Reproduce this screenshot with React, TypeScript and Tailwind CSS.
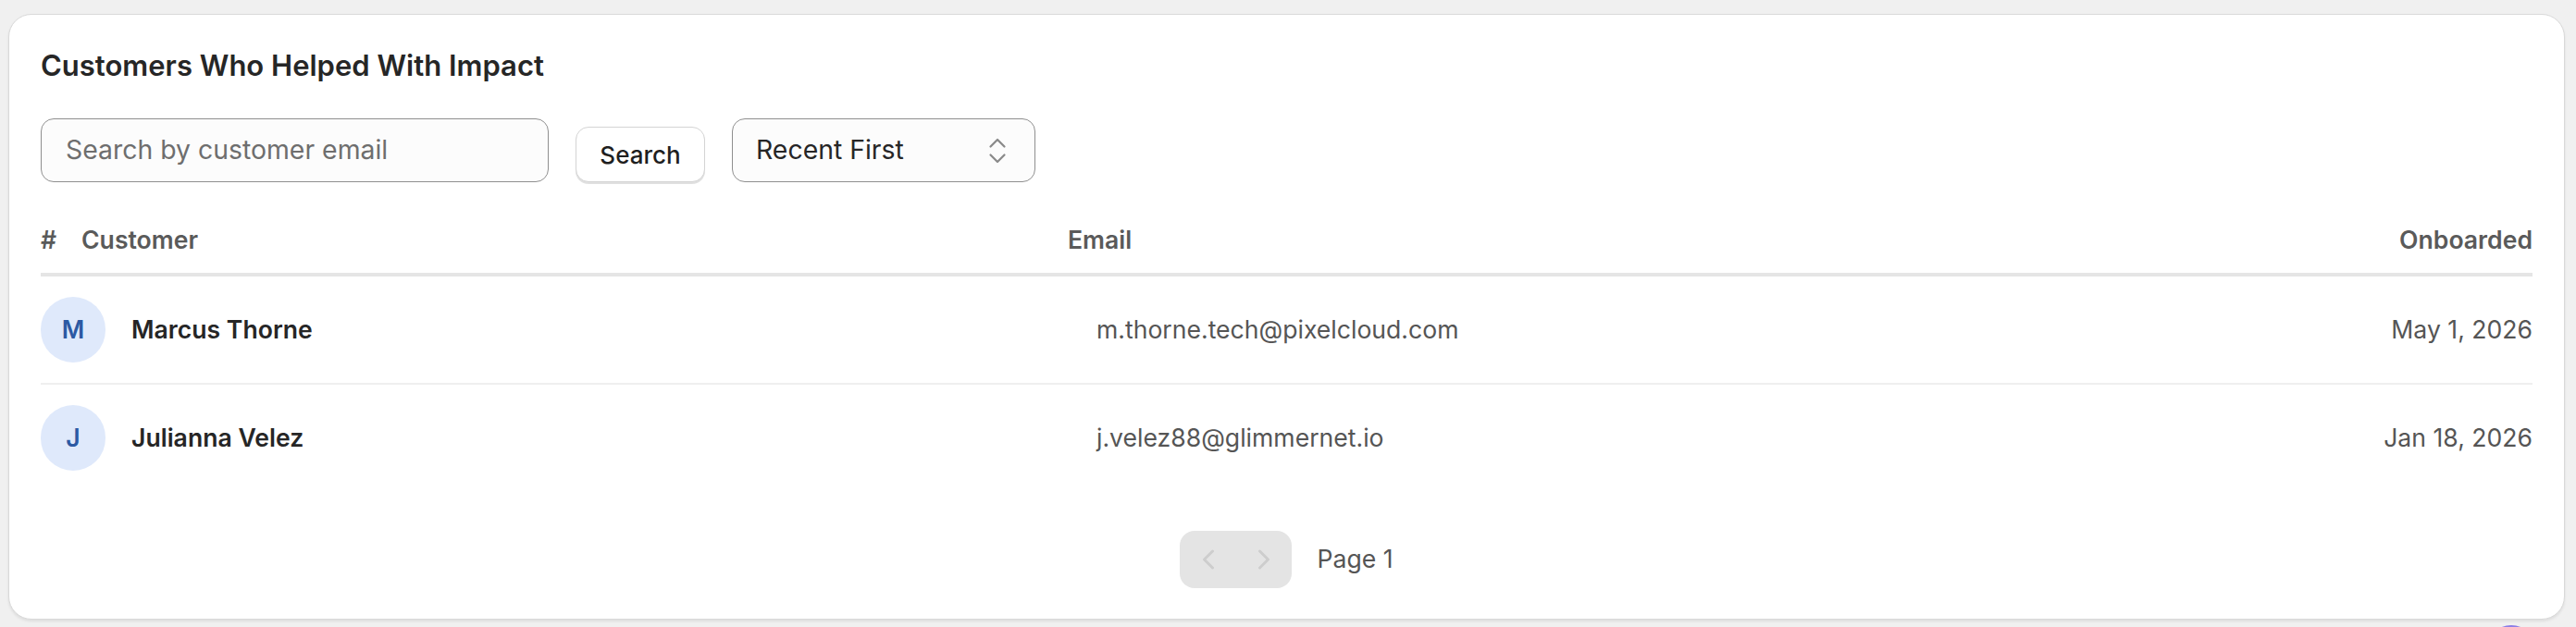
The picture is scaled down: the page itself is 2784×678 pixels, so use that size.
import { ChevronLeft, ChevronRight, ChevronsUpDown } from 'lucide-react';

interface Customer {
  name: string;
  email: string;
  onboarded: string;
}

const customers: Customer[] = [
  { name: 'Marcus Thorne', email: 'm.thorne.tech@pixelcloud.com', onboarded: 'May 1, 2026' },
  { name: 'Julianna Velez', email: 'j.velez88@glimmernet.io', onboarded: 'Jan 18, 2026' },
];

export default function App() {
  return (
    <div className="relative min-h-screen overflow-hidden bg-[#f0f0f0] pt-[15px] pl-[9px] pr-[12px] font-['Inter',sans-serif]">
      <div className="rounded-[25px] border border-[#d9d9d9] bg-white px-[34px] pt-[32px] pb-[33px] shadow-[0_2px_3px_rgba(0,0,0,0.08)]">
        <h2 className="text-[31px] leading-[46px] font-semibold text-[#262626]">
          Customers Who Helped With Impact
        </h2>

        {/* toolbar */}
        <div className="mt-[34px] flex items-end gap-[29px]">
          <div className="flex h-[69px] w-[549px] items-center rounded-[14px] border border-[#8f8f8f] bg-[#fcfcfc] px-[26px] text-[28.4px] text-[#6e6e6e]">
            Search by customer email
          </div>
          <button className="h-[60px] w-[140px] rounded-[14px] border border-[#d4d4d4] bg-white text-[26px] font-medium text-[#1f1f1f] shadow-[0_2px_0_rgba(0,0,0,0.12)]">
            Search
          </button>
          <div className="flex h-[69px] w-[328px] items-center justify-between rounded-[14px] border border-[#8f8f8f] bg-[#fcfcfc] pl-[25px] pr-[22px] text-[28.4px] text-[#262626]">
            <span>Recent First</span>
            <ChevronsUpDown size={36} strokeWidth={1.5} className="text-[#8a8a8a]" />
          </div>
        </div>

        {/* table */}
        <div className="mt-[27px]">
          <div className="flex border-b-[4px] border-[#e5e5e5] py-[17px] text-[26.6px] leading-[37px] font-semibold text-[#5a5a5a]">
            <span className="w-[44px]">#</span>
            <span className="w-[1066px]">Customer</span>
            <span className="flex-1">Email</span>
            <span>Onboarded</span>
          </div>
          {customers.map((c) => (
            <div
              key={c.email}
              className="flex items-center border-b-2 border-[#efefef] py-[22px] last:border-b-0"
            >
              <div className="flex w-[1141px] items-center gap-[28px]">
                <div className="flex h-[71px] w-[70px] items-center justify-center rounded-full bg-[#dfe9fb] text-[26.6px] font-semibold text-[#2c59a3]">
                  {c.name[0]}
                </div>
                <span className="text-[26.6px] font-semibold text-[#262626]">{c.name}</span>
              </div>
              <span className="flex-1 text-[26.6px] text-[#555555]">{c.email}</span>
              <span className="text-[26.6px] text-[#555555]">{c.onboarded}</span>
            </div>
          ))}
        </div>

        {/* pagination */}
        <div className="mt-[43px] flex items-center justify-center gap-[27px]">
          <div className="flex h-[62px] w-[121px] items-center rounded-[16px] bg-[#e4e4e4]">
            <button className="flex flex-1 items-center justify-center text-[#cdcdcd]">
              <ChevronLeft size={36} strokeWidth={2} />
            </button>
            <button className="flex flex-1 items-center justify-center text-[#cdcdcd]">
              <ChevronRight size={36} strokeWidth={2} />
            </button>
          </div>
          <span className="text-[26.6px] text-[#555555]">Page 1</span>
        </div>
      </div>

      <div className="absolute left-[2687px] top-[676px] h-[54px] w-[54px] rounded-full bg-[#8c7ee6]" />
    </div>
  );
}
